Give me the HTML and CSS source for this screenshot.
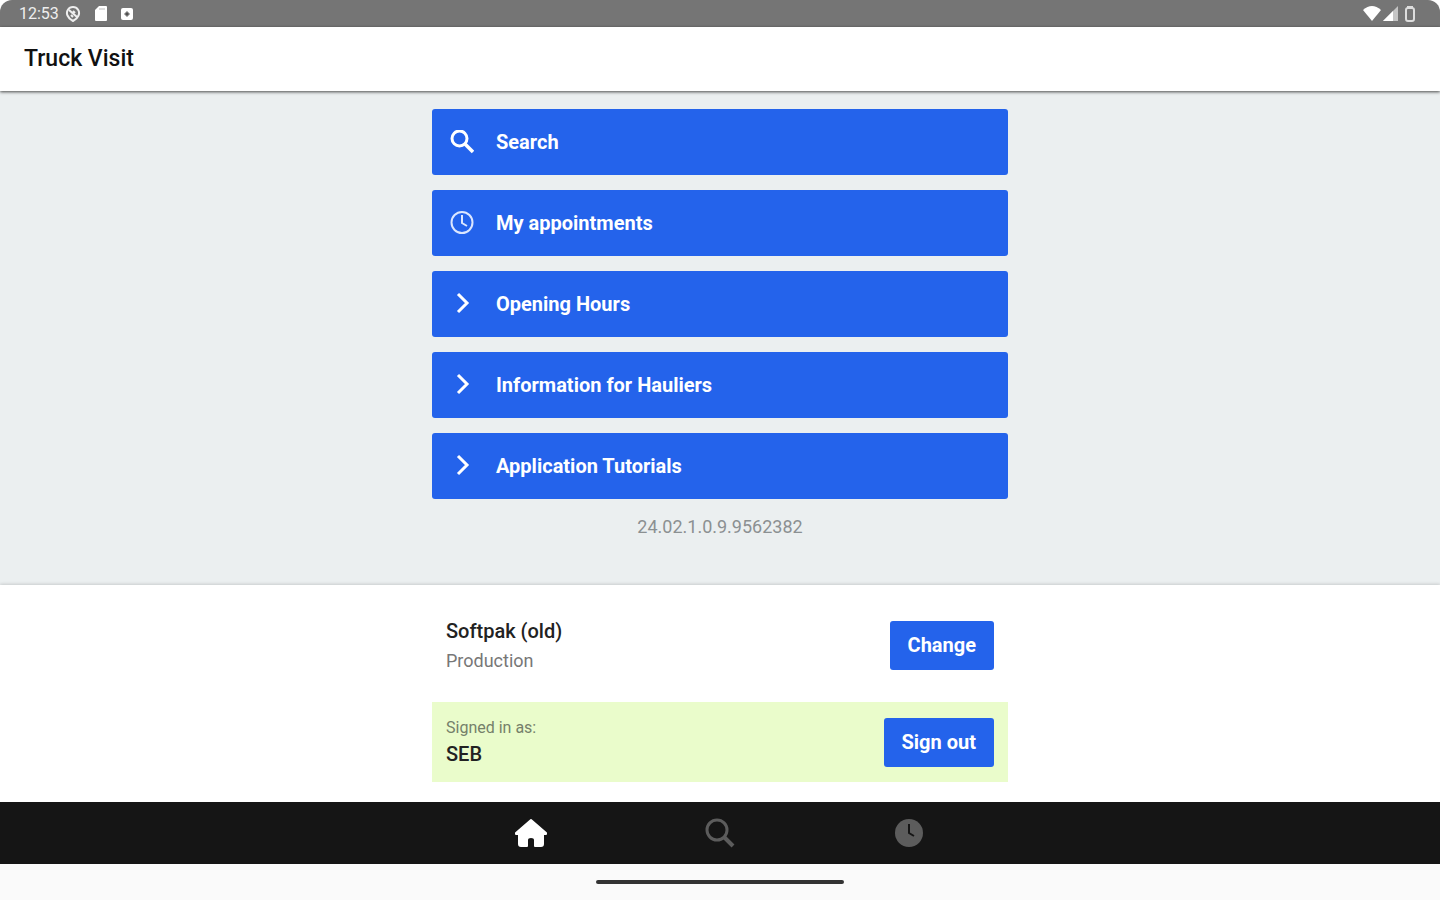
FILE: index.html
```html
<!DOCTYPE html>
<html lang="en">
<head>
    <meta charset="UTF-8">
    <meta name="viewport" content="width=device-width, initial-scale=1.0">
    <title>Truck Visit</title>
    <link rel="stylesheet" href="styles.css">
</head>
<body>
    <div class="status-bar">
        <div class="status-left">
            <span class="clock">12:53</span>
            <svg width="16" height="18" viewBox="0 0 16 18" fill="none" stroke="#eee" stroke-width="2">
                <path d="M8 2a6 6 0 0 0-5.500 8.500Q4 14 8 16Q12 14 13.500 10.500A6 6 0 0 0 8 2Z"/>
                <path d="M4 5l8 7M8 6l2 2M6 10l2 2"/>
            </svg>
            <svg class="sd-icon" width="12" height="15" viewBox="0 0 12 15" fill="#fff">
                <path d="M4 0h7a1 1 0 0 1 1 1v13a1 1 0 0 1-1 1H1a1 1 0 0 1-1-1V4z"/>
                <path d="M5 2v2M7 2v2M9 2v2" stroke="#bbb"/>
            </svg>
            <svg width="12" height="12" viewBox="0 0 12 12">
                <rect width="12" height="12" rx="2" fill="#fff"/>
                <path d="M6 3L9 6L6 9L3 6Z" fill="#757575"/>
                <circle cx="6" cy="6" r="1" fill="#444"/>
            </svg>
        </div>
        <div class="status-right">
            <svg width="18" height="15" viewBox="0 0 18 15" fill="#fff"><path d="M0 4Q9-4 18 4L9 15Z"/></svg>
            <svg width="15" height="15" viewBox="0 0 15 15"><path d="M15 0v15H0z" fill="#c4c4c4"/><path d="M10 5v10H0z" fill="#fff"/></svg>
            <svg class="battery-icon" width="12" height="16" viewBox="0 0 12 16" fill="none" stroke="#ddd" stroke-width="2"><path d="M4 2V1h4v1M2 4q0-2 2-2h4q2 0 2 2v9q0 2-2 2H4q-2 0-2-2z"/></svg>
        </div>
    </div>

    <header class="header">
        <h1>Truck Visit</h1>
    </header>

    <main class="content">
        <div class="container menu">
            <button class="menu-button">
                <svg width="24" height="24" viewBox="0 0 24 24" fill="none" stroke="#fff" stroke-width="3"><circle cx="9.500" cy="8.500" r="7.500"/><path d="M15 14l8 8" stroke-width="3.500"/></svg>
                Search
            </button>
            <button class="menu-button">
                <svg width="24" height="24" viewBox="0 0 24 24" fill="none" stroke="#dbe6ff" stroke-width="2"><circle cx="12" cy="11.500" r="10.500"/><path d="M12 4v8l5 3"/></svg>
                My appointments
            </button>
            <button class="menu-button">
                <svg width="24" height="24" viewBox="0 0 24 24" fill="none" stroke="#fff" stroke-width="3"><path d="M8 2l9 9-9 9"/></svg>
                Opening Hours
            </button>
            <button class="menu-button">
                <svg width="24" height="24" viewBox="0 0 24 24" fill="none" stroke="#fff" stroke-width="3"><path d="M8 2l9 9-9 9"/></svg>
                Information for Hauliers
            </button>
            <button class="menu-button">
                <svg width="24" height="24" viewBox="0 0 24 24" fill="none" stroke="#fff" stroke-width="3"><path d="M8 2l9 9-9 9"/></svg>
                Application Tutorials
            </button>
            <p class="version">24.02.1.0.9.9562382</p>
        </div>
    </main>

    <section class="account">
        <div class="container">
            <div class="account-row">
                <div class="terminal">
                    <p class="name">Softpak (old)</p>
                    <p class="environment">Production</p>
                </div>
                <button class="small-button">Change</button>
            </div>
            <div class="account-row signed-in">
                <div>
                    <p class="label">Signed in as:</p>
                    <p class="name">SEB</p>
                </div>
                <button class="small-button">Sign out</button>
            </div>
        </div>
    </section>

    <nav class="tab-bar">
        <div class="container tabs">
            <a href="#home" aria-label="Home">
                <svg width="34" height="30" viewBox="0 0 34 30" fill="#fff" stroke="#fff" stroke-width="2" stroke-linejoin="round"><path d="M17 2L2 15v1h3v10q0 2 2 2h6v-6q0-3 4-3t4 3v6h6q2 0 2-2V16h3v-1z"/></svg>
            </a>
            <a href="#search" aria-label="Search">
                <svg width="30" height="30" viewBox="0 0 30 30" fill="none" stroke="#5c5c5c" stroke-width="3"><circle cx="12" cy="12" r="10"/><path d="M19 19l9 9" stroke-width="4"/></svg>
            </a>
            <a href="#appointments" aria-label="My appointments">
                <svg width="30" height="30" viewBox="0 0 30 30"><circle cx="15" cy="15" r="14" fill="#5c5c5c"/><path d="M15 6v9l5 3" fill="none" stroke="#151515" stroke-width="2"/></svg>
            </a>
        </div>
    </nav>

    <div class="gesture-bar"><div class="handle"></div></div>
</body>
</html>
```
FILE: styles.css
```css
* {
    margin: 0;
    padding: 0;
    box-sizing: border-box;
    font-family: Roboto, 'Liberation Sans', sans-serif;
}

body {
    min-height: 100vh;
    display: flex;
    flex-direction: column;
    background: #fff;
}

svg {
    display: block;
    flex-shrink: 0;
}

.container {
    width: 40%;
    min-width: 320px;
    margin: 0 auto;
}

/* Android status bar, rounded by the display corners */
.status-bar {
    height: 27px;
    padding: 0 24px 0 19px;
    display: flex;
    justify-content: space-between;
    align-items: center;
    background: #757575;
    color: #eee;
    border-radius: 12px 12px 0 0;
}

.status-left,
.status-right {
    display: flex;
    align-items: center;
}

.status-left {
    gap: 14px;
}

.clock {
    font-size: 16px;
    margin-right: -8px;
}

.status-right {
    gap: 2px;
}

.battery-icon {
    margin-left: 4px;
}

.header {
    height: 64px;
    padding: 0 24px 2px;
    display: flex;
    align-items: center;
    background: #fff;
    box-shadow: 0 1px 3px rgba(0, 0, 0, 0.7);
    z-index: 1;
}

h1 {
    font-size: 23px;
    font-weight: 500;
    color: #111;
}

.content {
    flex: 1;
    padding: 18px 0 32px;
    background: #ebeff0;
}

.menu {
    display: flex;
    flex-direction: column;
    gap: 15px;
}

button {
    border: none;
    border-radius: 3px;
    background: #2463eb;
    color: #fff;
    font-weight: 700;
    cursor: pointer;
}

.menu-button {
    height: 66px;
    padding: 0 18px;
    display: flex;
    align-items: center;
    gap: 22px;
    font-size: 20px;
    text-align: left;
}

.version {
    font-size: 18px;
    line-height: 26px;
    text-align: center;
    color: #8b9092;
}

.account {
    padding: 20px 0;
    background: #fff;
    box-shadow: 0 -1px 3px rgba(0, 0, 0, 0.15);
}

.account-row {
    min-height: 80px;
    padding: 0 14px;
    display: flex;
    justify-content: space-between;
    align-items: center;
}

.signed-in {
    margin-top: 17px;
    background: #eafccb;
}

.terminal {
    padding-top: 4px;
}

.name {
    font-size: 20px;
    font-weight: 500;
    line-height: 28px;
    color: #222;
}

.environment {
    font-size: 18px;
    line-height: 32px;
    color: #777;
}

.label {
    font-size: 16px;
    line-height: 24px;
    color: #75806a;
}

.small-button {
    height: 49px;
    padding: 0 18px;
    font-size: 20px;
}

.tab-bar {
    background: #151515;
}

.tabs {
    height: 62px;
    padding: 0 4px;
    display: grid;
    grid-template-columns: repeat(3, 1fr);
    justify-items: center;
    align-items: center;
}

.gesture-bar {
    height: 36px;
    display: flex;
    justify-content: center;
    align-items: center;
    background: #fafafa;
}

.handle {
    width: 248px;
    height: 4px;
    border-radius: 2px;
    background: #333;
}
```
